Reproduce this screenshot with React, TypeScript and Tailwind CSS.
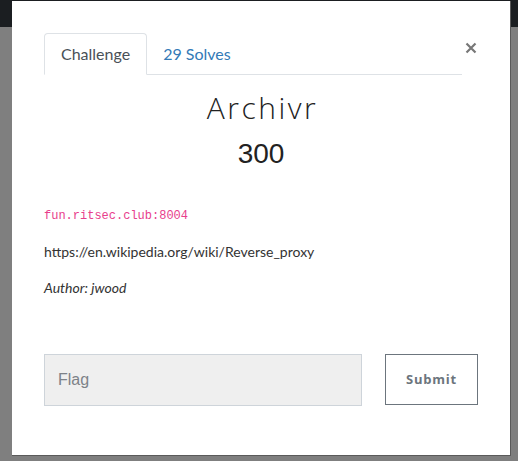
export default function App() {
  return (
    <div className="relative h-[461px] w-[518px] overflow-hidden bg-[#7f7f7f]">
      <div className="h-[27px] bg-[#1b1e21]"></div>

      <div className="absolute left-[12px] top-[1px] h-[455px] w-[499px] border-b border-r border-[#5a5a5a] bg-white px-[32px] pt-[32px] font-['Lato',sans-serif] text-[#333]">
        <div className="flex items-start">
          <div className="flex w-[419px] border-b border-[#dee2e6] text-[16px]">
            <div className="-mb-px flex h-[42px] items-center rounded-t-[4px] border border-[#dee2e6] border-b-white bg-white px-[16px] text-[#495057]">
              Challenge
            </div>
            <div className="flex h-[41px] items-center px-[16px] text-[#337ab7]">
              29 Solves
            </div>
          </div>
          <button className="ml-[2px] mt-[3px] flex h-[24px] w-[14px] items-center justify-center text-[#777]">
            <svg width="12" height="12" viewBox="0 0 12 12">
              <path
                d="M1.5 1.5 L10.5 10.5 M10.5 1.5 L1.5 10.5"
                stroke="currentColor"
                strokeWidth="2.2"
              />
            </svg>
          </button>
        </div>

        <div className="mt-[14px] pl-[3px] text-center font-['Open_Sans',sans-serif] text-[30px] font-light leading-[38px] tracking-[2.5px] text-[#222]">
          Archivr
        </div>
        <div className="mt-[11px] text-center font-['Liberation_Sans',sans-serif] text-[28px] leading-[32px] text-[#222]">
          300
        </div>

        <div className="mt-[38px] font-['Liberation_Mono',monospace] text-[12px] leading-[16px] text-[#e83e8c]">
          fun.ritsec.club:8004
        </div>
        <div className="mt-[18px] text-[14px] leading-[20px]">
          https://en.wikipedia.org/wiki/Reverse_proxy
        </div>
        <div className="mt-[16px] text-[14px] italic leading-[20px]">
          Author: jwood
        </div>

        <div className="mt-[56px] flex items-start">
          <input
            placeholder="Flag"
            className="h-[52px] w-[318px] border border-[#ced4da] bg-[#efefef] px-[13px] font-['Liberation_Sans',sans-serif] text-[16px] text-[#495057] outline-none placeholder:text-[#7d8288]"
          />
          <button className="ml-auto h-[51px] w-[93px] border border-[#6c757d] bg-white font-['Open_Sans',sans-serif] text-[13px] font-bold tracking-[0.8px] text-[#6c757d]">
            Submit
          </button>
        </div>
      </div>
    </div>
  );
}
